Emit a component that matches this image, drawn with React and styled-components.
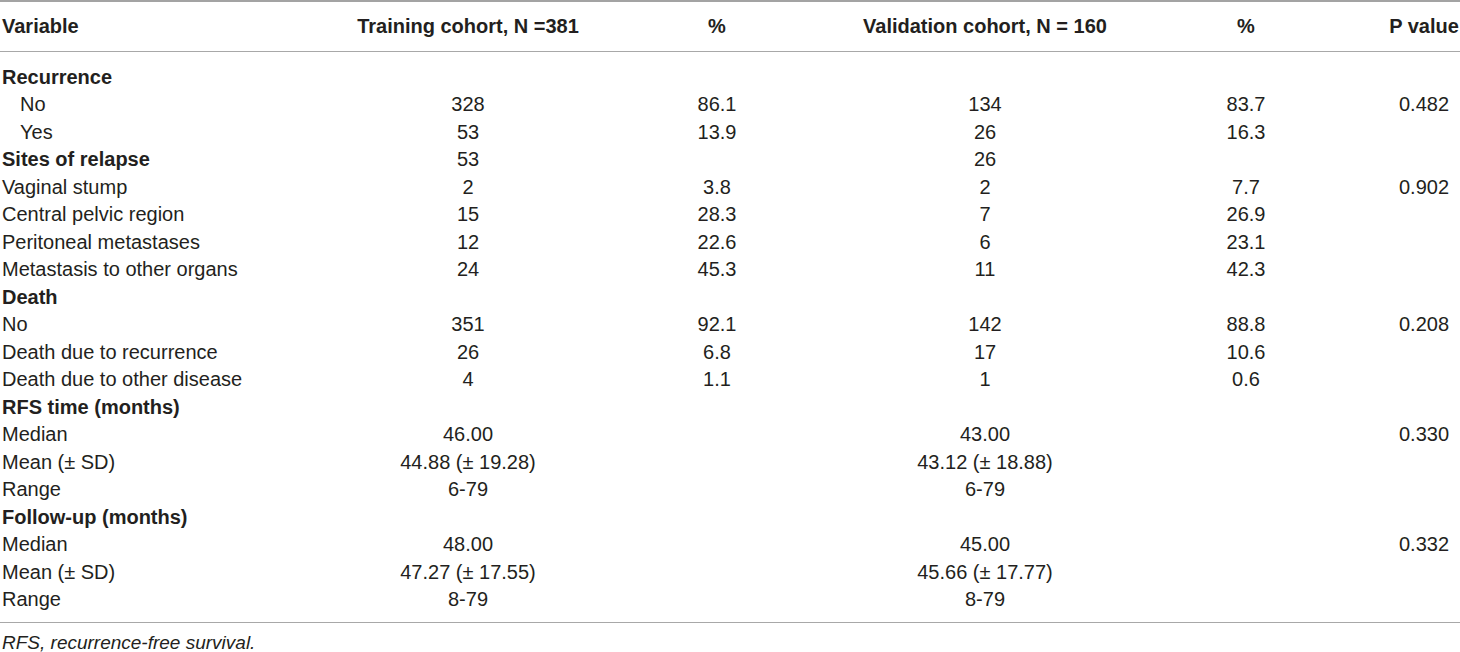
import React from 'react';
import styled, { createGlobalStyle } from 'styled-components';

const GlobalStyle = createGlobalStyle`
  html, body {
    margin: 0;
    padding: 0;
    background: #fff;
  }
  body {
    font-family: "Liberation Sans", Arial, Helvetica, sans-serif;
    color: #231f20;
  }
`;

const Wrapper = styled.div`
  width: 1460px;
  font-size: 20px;
`;

const Table = styled.div`
  border-top: 2px solid #a3a3a3;
  border-bottom: 1px solid #a8a8a8;
`;

const Row = styled.div`
  display: grid;
  grid-template-columns: 368px 200px 298px 238px 284px 72px;
  height: ${(p) => (p.$head ? '49px' : '27.5px')};
  align-items: center;
  font-weight: ${(p) => (p.$head ? 700 : 400)};
`;

const HeadRow = styled(Row)`
  border-bottom: 1px solid #a8a8a8;
`;

const Body = styled.div`
  padding: 11.25px 0 8.75px;
`;

const Label = styled.div`
  padding-left: ${(p) => (p.$indent ? '20px' : '2px')};
  font-weight: ${(p) => (p.$bold ? 700 : 'inherit')};
  white-space: nowrap;
`;

const Cell = styled.div`
  display: flex;
  justify-content: center;
  white-space: nowrap;
  min-width: 0;
`;

const Footnote = styled.div`
  font-style: italic;
  font-size: 19px;
  padding: 9px 0 0 2px;
  line-height: 22px;
`;

const headers = ['Training cohort, N =381', '%', 'Validation cohort, N = 160', '%', 'P value'];

const rows = [
  { label: 'Recurrence', section: true },
  { label: 'No', indent: true, cells: ['328', '86.1', '134', '83.7', '0.482'] },
  { label: 'Yes', indent: true, cells: ['53', '13.9', '26', '16.3', ''] },
  { label: 'Sites of relapse', section: true, cells: ['53', '', '26', '', ''] },
  { label: 'Vaginal stump', cells: ['2', '3.8', '2', '7.7', '0.902'] },
  { label: 'Central pelvic region', cells: ['15', '28.3', '7', '26.9', ''] },
  { label: 'Peritoneal metastases', cells: ['12', '22.6', '6', '23.1', ''] },
  { label: 'Metastasis to other organs', cells: ['24', '45.3', '11', '42.3', ''] },
  { label: 'Death', section: true },
  { label: 'No', cells: ['351', '92.1', '142', '88.8', '0.208'] },
  { label: 'Death due to recurrence', cells: ['26', '6.8', '17', '10.6', ''] },
  { label: 'Death due to other disease', cells: ['4', '1.1', '1', '0.6', ''] },
  { label: 'RFS time (months)', section: true },
  { label: 'Median', cells: ['46.00', '', '43.00', '', '0.330'] },
  { label: 'Mean (± SD)', cells: ['44.88 (± 19.28)', '', '43.12 (± 18.88)', '', ''] },
  { label: 'Range', cells: ['6-79', '', '6-79', '', ''] },
  { label: 'Follow-up (months)', section: true },
  { label: 'Median', cells: ['48.00', '', '45.00', '', '0.332'] },
  { label: 'Mean (± SD)', cells: ['47.27 (± 17.55)', '', '45.66 (± 17.77)', '', ''] },
  { label: 'Range', cells: ['8-79', '', '8-79', '', ''] },
];

const App = () => {
  return (
    <Wrapper>
      <GlobalStyle />
      <Table>
        <HeadRow $head>
          <Label>Variable</Label>
          {headers.map((h, i) => (
            <Cell key={i}>{h}</Cell>
          ))}
        </HeadRow>
        <Body>
          {rows.map((r, i) => (
            <Row key={i}>
              <Label $indent={r.indent} $bold={r.section}>{r.label}</Label>
              {(r.cells || ['', '', '', '', '']).map((c, j) => (
                <Cell key={j}>{c}</Cell>
              ))}
            </Row>
          ))}
        </Body>
      </Table>
      <Footnote>RFS, recurrence-free survival.</Footnote>
    </Wrapper>
  );
};

export default App;
